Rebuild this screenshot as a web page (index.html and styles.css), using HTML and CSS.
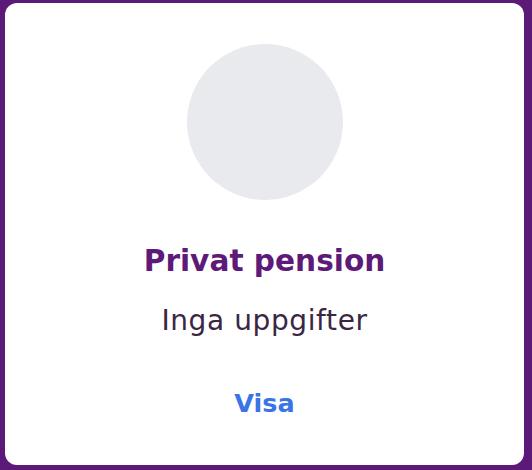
FILE: index.html
```html
<!DOCTYPE html>
<html lang="sv">
<head>
<meta charset="utf-8">
<link rel="stylesheet" href="styles.css">
</head>
<body>
<div class="card">
  <div class="avatar"></div>
  <h2 class="title">Privat pension</h2>
  <p class="status">Inga uppgifter</p>
  <a class="link" href="#">Visa</a>
</div>
</body>
</html>
```
FILE: styles.css
```css
html, body {
  margin: 0;
  height: 100%;
}
body {
  background: #5b1a78;
  padding: 3px 8px 5px 5px;
  box-sizing: border-box;
  font-family: "DejaVu Sans", "Noto Sans", sans-serif;
}
.card {
  background: #fff;
  border-radius: 12px;
  height: 100%;
  display: flex;
  flex-direction: column;
  align-items: center;
}
.avatar {
  width: 156px;
  height: 156px;
  border-radius: 50%;
  background: #e9eaee;
  margin-top: 41px;
}
.title {
  margin: 43px 0 0;
  font-size: 29.6px;
  line-height: 36px;
  font-weight: 700;
  color: #5e1a78;
}
.status {
  margin: 25px 0 0;
  font-size: 28px;
  line-height: 34px;
  letter-spacing: 0.6px;
  font-weight: 400;
  color: #3b2742;
}
.link {
  margin-top: 50px;
  font-size: 25.5px;
  line-height: 30px;
  font-weight: 700;
  color: #3a74e6;
  text-decoration: none;
}
```
